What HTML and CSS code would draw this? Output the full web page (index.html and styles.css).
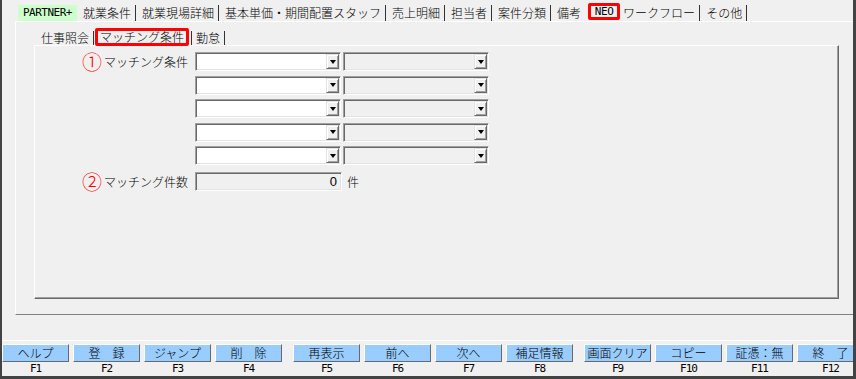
FILE: index.html
```html
<!DOCTYPE html>
<html lang="ja">
<head>
<meta charset="utf-8">
<title>マッチング条件</title>
<link rel="stylesheet" href="styles.css">
</head>
<body>
<div class="window">
  <div class="tabs">
    <div class="tab tab-partner">PARTNER+</div>
    <div class="tab">就業条件</div>
    <div class="tab">就業現場詳細</div>
    <div class="tab">基本単価・期間配置スタッフ</div>
    <div class="tab">売上明細</div>
    <div class="tab">担当者</div>
    <div class="tab">案件分類</div>
    <div class="tab tab-nosep">備考</div>
    <div class="tab tab-neo">NEO</div>
    <div class="tab tab-after-neo">ワークフロー</div>
    <div class="tab">その他</div>
  </div>
  <div class="outer">
    <div class="subtabs">
      <div class="subtab">仕事照会</div>
      <div class="subtab subtab-mark">マッチング条件</div>
      <div class="subtab subtab-last">勤怠</div>
    </div>
    <div class="inner">
      <div class="form">
        <div class="label"><span class="num">①</span><span>マッチング条件</span></div>
        <div class="combos">
          <div class="combo-row">
            <div class="combo"><div class="combo-field"></div><div class="combo-btn"><span class="arrow"></span></div></div>
            <div class="combo combo-off"><div class="combo-field"></div><div class="combo-btn"><span class="arrow"></span></div></div>
          </div>
          <div class="combo-row">
            <div class="combo"><div class="combo-field"></div><div class="combo-btn"><span class="arrow"></span></div></div>
            <div class="combo combo-off"><div class="combo-field"></div><div class="combo-btn"><span class="arrow"></span></div></div>
          </div>
          <div class="combo-row">
            <div class="combo"><div class="combo-field"></div><div class="combo-btn"><span class="arrow"></span></div></div>
            <div class="combo combo-off"><div class="combo-field"></div><div class="combo-btn"><span class="arrow"></span></div></div>
          </div>
          <div class="combo-row">
            <div class="combo"><div class="combo-field"></div><div class="combo-btn"><span class="arrow"></span></div></div>
            <div class="combo combo-off"><div class="combo-field"></div><div class="combo-btn"><span class="arrow"></span></div></div>
          </div>
          <div class="combo-row">
            <div class="combo"><div class="combo-field"></div><div class="combo-btn"><span class="arrow"></span></div></div>
            <div class="combo combo-off"><div class="combo-field"></div><div class="combo-btn"><span class="arrow"></span></div></div>
          </div>
        </div>
      </div>
      <div class="count-row">
        <div class="label"><span class="num">②</span><span>マッチング件数</span></div>
        <div class="count-field">0</div>
        <span class="unit">件</span>
      </div>
    </div>
  </div>
  <div class="fkeys">
    <div class="fgroup">
      <div class="fkey"><div class="fbtn">ヘルプ</div><div class="flabel">F1</div></div>
      <div class="fkey"><div class="fbtn">登　録</div><div class="flabel">F2</div></div>
      <div class="fkey"><div class="fbtn">ジャンプ</div><div class="flabel">F3</div></div>
      <div class="fkey"><div class="fbtn">削　除</div><div class="flabel">F4</div></div>
    </div>
    <div class="fgroup">
      <div class="fkey"><div class="fbtn">再表示</div><div class="flabel">F5</div></div>
      <div class="fkey"><div class="fbtn">前へ</div><div class="flabel">F6</div></div>
      <div class="fkey"><div class="fbtn">次へ</div><div class="flabel">F7</div></div>
      <div class="fkey"><div class="fbtn">補足情報</div><div class="flabel">F8</div></div>
    </div>
    <div class="fgroup">
      <div class="fkey"><div class="fbtn">画面クリア</div><div class="flabel">F9</div></div>
      <div class="fkey"><div class="fbtn">コピー</div><div class="flabel">F10</div></div>
      <div class="fkey"><div class="fbtn">証憑：無</div><div class="flabel">F11</div></div>
      <div class="fkey"><div class="fbtn">終　了</div><div class="flabel">F12</div></div>
    </div>
  </div>
</div>
</body>
</html>
```

FILE: styles.css
```css
html, body {
  margin: 0;
  padding: 0;
  background: #f0f0f0;
}

body {
  font-family: "Noto Sans CJK JP", "Noto Sans", sans-serif;
  font-size: 12px;
  font-weight: 300;
  color: #000;
}

.window {
  width: 856px;
  height: 379px;
  box-sizing: border-box;
  border-left: 2px solid #434343;
  border-right: 3px solid #434343;
  border-bottom: 3px solid #434343;
  background: #f0f0f0;
  overflow: hidden;
}

/* main tab strip */
.tabs {
  display: flex;
  height: 16px;
  margin: 5px 0 0 16px;
}

.tab {
  height: 16px;
  padding: 0 4px 0 6px;
  border-right: 1px solid #333;
  line-height: 16px;
  white-space: nowrap;
  flex: none;
}

.tab-partner {
  width: 59px;
  box-sizing: border-box;
  padding: 0;
  border-right: none;
  background: #ccffcc;
  text-align: center;
  font-family: "DejaVu Sans Mono", monospace;
  font-size: 11px;
  font-weight: 400;
  letter-spacing: -0.5px;
}

.tab-nosep {
  border-right: none;
  padding-right: 7px;
}

.tab-neo {
  width: 32px;
  height: 17px;
  margin-top: -2px;
  box-sizing: border-box;
  padding: 0;
  border: 3px solid #ff0000;
  border-radius: 2px;
  text-align: center;
  font-family: "DejaVu Sans Mono", monospace;
  font-size: 11px;
  font-weight: 400;
  letter-spacing: -0.4px;
  line-height: 11px;
}

.tab-after-neo {
  padding-left: 3px;
}

/* outer tab page */
.outer {
  width: 841px;
  height: 294px;
  margin-left: 13px;
  box-sizing: border-box;
  border-top: 1px solid #fff;
  border-left: 1px solid #fff;
  border-bottom: 1px solid #808080;
}

.subtabs {
  display: flex;
  height: 17px;
  margin: 6px 0 0 18px;
}

.subtab {
  height: 14px;
  margin-top: 3px;
  padding: 0 4px 0 7px;
  border-right: 1px solid #333;
  line-height: 14px;
  white-space: nowrap;
  flex: none;
}

.subtab-mark {
  height: 18px;
  margin: 0 0 0 1px;
  box-sizing: border-box;
  padding: 0 2px;
  border: 3px solid #ff0000;
  border-radius: 2px;
  line-height: 12px;
}

.subtab-last {
  margin-left: 2px;
  padding: 0 4px;
  border-left: 1px solid #333;
}

/* inner tab page */
.inner {
  width: 805px;
  height: 254px;
  margin-left: 18px;
  box-sizing: border-box;
  border: 1px solid;
  border-color: #fff #696969 #696969 #fff;
  box-shadow: inset -1px -1px 0 #a0a0a0;
}

.form {
  display: flex;
  align-items: flex-start;
  padding: 6px 0 0 47px;
}

.label {
  width: 105px;
  height: 19px;
  margin-right: 8px;
  display: flex;
  align-items: center;
  gap: 4px;
  white-space: nowrap;
  flex: none;
}

.num {
  display: inline-block;
  width: 18px;
  text-align: center;
  font-size: 20px;
  line-height: 19px;
  color: #ff0000;
}

.combos {
  display: flex;
  flex-direction: column;
  gap: 4.5px;
}

.combo-row {
  display: flex;
  gap: 2px;
}

.combo {
  display: flex;
  width: 146px;
  height: 19px;
  box-sizing: border-box;
  padding: 1px;
  border: 1px solid;
  border-color: #a0a0a0 #fff #fff #a0a0a0;
  box-shadow: inset 1px 1px 0 #696969, inset -1px -1px 0 #e3e3e3;
  background: #fff;
}

.combo-off {
  background: #f0f0f0;
}

.combo-field {
  flex: 1;
}

.combo-btn {
  width: 13px;
  box-sizing: border-box;
  border: 1px solid;
  border-color: #e3e3e3 #696969 #696969 #e3e3e3;
  box-shadow: inset 1px 1px 0 #fff, inset -1px -1px 0 #a0a0a0;
  background: #f0f0f0;
  display: flex;
  align-items: center;
  justify-content: center;
}

.arrow {
  width: 0;
  height: 0;
  border-left: 3.5px solid transparent;
  border-right: 3.5px solid transparent;
  border-top: 4px solid #000;
}

.count-row {
  display: flex;
  align-items: center;
  margin-top: 7px;
  padding-left: 47px;
}

.count-field {
  width: 147px;
  height: 19px;
  box-sizing: border-box;
  padding: 0 4px 0 0;
  border: 1px solid;
  border-color: #a0a0a0 #fff #fff #a0a0a0;
  box-shadow: inset 1px 1px 0 #696969, inset -1px -1px 0 #e3e3e3;
  background: #f0f0f0;
  text-align: right;
  font-family: "Liberation Sans", sans-serif;
  font-size: 13px;
  font-weight: 400;
  line-height: 17px;
}

.unit {
  margin-left: 5px;
}

/* function keys */
.fkeys {
  display: flex;
  gap: 11px;
  margin-top: 25px;
  padding-top: 3px;
  border-top: 1px solid #fff;
}

.fgroup {
  display: flex;
  gap: 4px;
  flex: none;
}

.fkey {
  width: 67px;
  flex: none;
}

.fbtn {
  height: 18px;
  box-sizing: border-box;
  border: 1px solid;
  border-color: #fff #696969 #696969 #fff;
  background: #99ccff;
  display: flex;
  align-items: center;
  justify-content: center;
  line-height: 1;
  white-space: nowrap;
}

.flabel {
  height: 14px;
  text-align: center;
  font-family: "DejaVu Sans Mono", monospace;
  font-size: 11px;
  font-weight: 400;
  line-height: 14px;
  letter-spacing: -1px;
}
```
